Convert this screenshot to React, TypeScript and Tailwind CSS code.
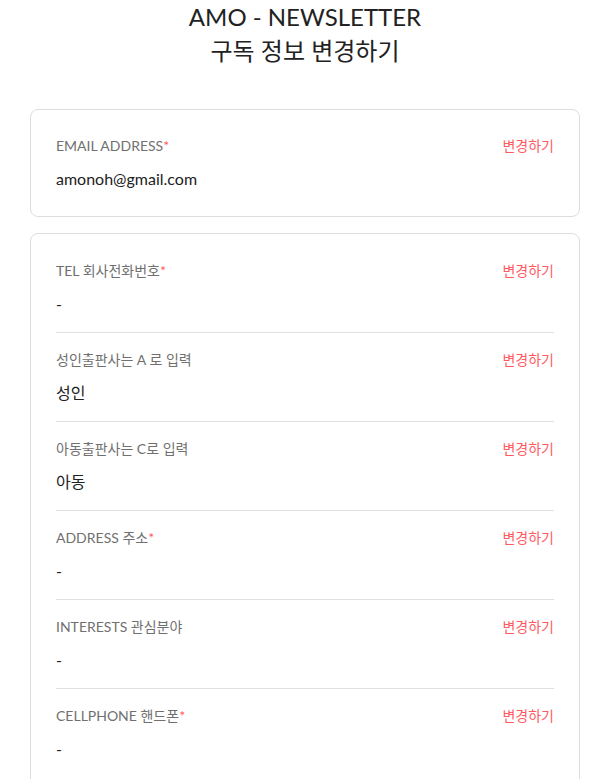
import React from "react";

const font = { fontFamily: "Lato, 'Noto Sans CJK KR', sans-serif" };

type Field = { label: string; required?: boolean; value: string };

const Row = ({ f, first }: { f: Field; first?: boolean }) => (
  <div className={`pt-[17px] pb-[16px] ${first ? "" : "border-t border-[#e0e0e0]"}`}>
    <div className="flex items-center justify-between h-5">
      <span className="text-[14px] leading-5 text-[#707070]">
        {f.label}
        {f.required && <span className="text-[#ff5a5f]">*</span>}
      </span>
      <span className="text-[14px] leading-5 text-[#ff5a5f]">변경하기</span>
    </div>
    <div className="mt-[11px] text-[16px] leading-6 text-[#222]">{f.value}</div>
  </div>
);

export default function App() {
  const fields: Field[] = [
    { label: "TEL 회사전화번호", required: true, value: "-" },
    { label: "성인출판사는 A 로 입력", value: "성인" },
    { label: "아동출판사는 C로 입력", value: "아동" },
    { label: "ADDRESS 주소", required: true, value: "-" },
    { label: "INTERESTS 관심분야", value: "-" },
    { label: "CELLPHONE 핸드폰", required: true, value: "-" },
  ];
  return (
    <div className="bg-white min-h-screen pl-[30px] pr-[32px]" style={font}>
      <div className="text-center text-[24px] leading-[34px] text-[#222]">
        <div>AMO - NEWSLETTER</div>
        <div>구독 정보 변경하기</div>
      </div>
      <div className="mt-[41px] border border-[#ddd] rounded-lg px-[25px] py-[9px]">
        <Row f={{ label: "EMAIL ADDRESS", required: true, value: "amonoh@gmail.com" }} first />
      </div>
      <div className="mt-[16px] border border-[#ddd] rounded-lg px-[25px] pt-[10px] pb-[9px]">
        {fields.map((f, i) => (
          <Row key={i} f={f} first={i === 0} />
        ))}
      </div>
    </div>
  );
}
